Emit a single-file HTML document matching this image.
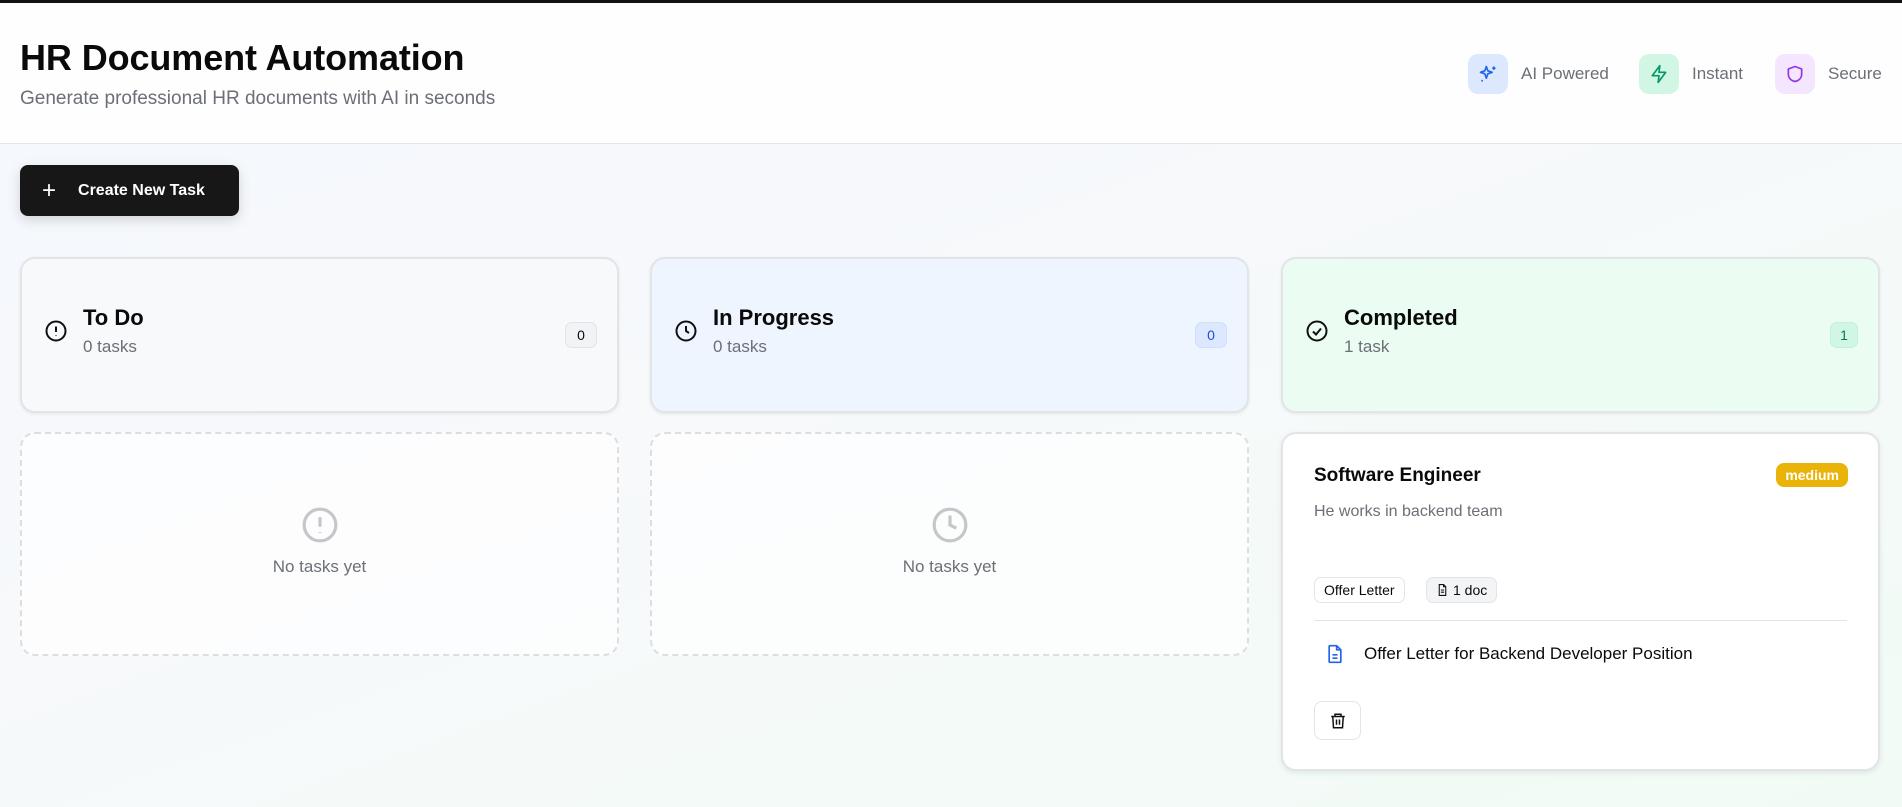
<!DOCTYPE html>
<html><head><meta charset="utf-8"><style>
*{box-sizing:border-box;margin:0;padding:0}
body{width:1902px;height:807px;overflow:hidden;font-family:"Liberation Sans",sans-serif;color:#0a0a0a;background:linear-gradient(160deg,#f4f7fc 0%,#f7f9fb 45%,#f1fbf5 100%);border-top:3px solid #111;position:relative}
.hdr{position:absolute;left:0;top:0;width:1902px;height:141px;background:rgba(255,255,255,.85);border-bottom:1px solid #e3e5e8}
h1{position:absolute;left:20px;top:34px;font-size:36px;font-weight:700;letter-spacing:-.1px}
.sub{position:absolute;left:20px;top:85px;font-size:19px;color:#6b6f76}
.feat{position:absolute;top:51px;display:flex;align-items:center;gap:13px;font-size:17px;color:#6b6f76}
.fi{width:40px;height:40px;border-radius:10px;display:flex;align-items:center;justify-content:center}
.btn{position:absolute;left:20px;top:162px;width:219px;height:51px;background:#171717;border-radius:8px;color:#fff;font-size:16px;font-weight:700;display:flex;align-items:center;padding-left:22px;gap:22px;box-shadow:0 4px 12px rgba(0,0,0,.15)}
.col{position:absolute;top:254px;width:599px}
.ch{height:156px;border-radius:15px;border:2px solid #e2e4e8;box-shadow:0 1px 3px rgba(0,0,0,.08);position:relative}
.ch svg{position:absolute;left:22px;top:60px}
.ch .t{position:absolute;left:61px;top:46px;font-size:22px;font-weight:700}
.ch .n{position:absolute;left:61px;top:78px;font-size:17px;color:#6b6f76}
.ch .b{position:absolute;right:20px;top:63px;min-width:32px;height:26px;border-radius:7px;border:1px solid #e2e4e8;font-size:14px;display:flex;align-items:center;justify-content:center}
.empty{margin-top:19px;height:224px;border:2px dashed #dcdee2;border-radius:15px;background:rgba(255,255,255,.7);text-align:center;color:#6b6f76;font-size:17px}
.empty svg{margin-top:72px}
.card{margin-top:19px;height:339px;border:2px solid #e2e4e8;border-radius:15px;background:#fff;box-shadow:0 2px 6px rgba(0,0,0,.08);position:relative}
</style></head><body>
<div class="hdr">
<h1>HR Document Automation</h1>
<div class="sub">Generate professional HR documents with AI in seconds</div>
<div class="feat" style="left:1468px"><div class="fi" style="background:#dbe8fe"><svg width="20" height="20" viewBox="0 0 24 24" fill="none" stroke="#2563eb" stroke-width="2" stroke-linejoin="round"><path d="M10 3l1.8 5.2L17 10l-5.2 1.8L10 17l-1.8-5.2L3 10l5.2-1.8z"/><path d="M19 3v4M17 5h4M5 19v2M4 20h2"/></svg></div>AI Powered</div>
<div class="feat" style="left:1639px"><div class="fi" style="background:#d1f7e4"><svg width="20" height="20" viewBox="0 0 24 24" fill="none" stroke="#059669" stroke-width="2" stroke-linejoin="round"><path d="M13 2L4 14h8l-1 8 9-12h-8z"/></svg></div>Instant</div>
<div class="feat" style="left:1775px"><div class="fi" style="background:#f3e6fe"><svg width="20" height="20" viewBox="0 0 24 24" fill="none" stroke="#9333ea" stroke-width="2" stroke-linejoin="round"><path d="M12 3l8 3v6c0 5-3.5 8-8 9-4.5-1-8-4-8-9V6z"/></svg></div>Secure</div>
</div>
<div class="btn"><span style="font-size:24px;font-weight:300">+</span>Create New Task</div>

<div class="col" style="left:20px">
<div class="ch" style="background:#f8f9fb"><svg width="24" height="24" viewBox="0 0 24 24" fill="none" stroke="#111" stroke-width="2"><circle cx="12" cy="12" r="9.5"/><path d="M12 7.5v5.5M12 16.5v.5"/></svg><div class="t">To Do</div><div class="n">0 tasks</div><div class="b" style="background:#f1f3f6">0</div></div>
<div class="empty"><svg width="38" height="38" viewBox="0 0 24 24" fill="none" stroke="#c4c6ca" stroke-width="2"><circle cx="12" cy="12" r="10"/><path d="M12 7v6M12 16.5v.5"/></svg><div style="margin-top:8px">No tasks yet</div></div>
</div>
<div class="col" style="left:650px">
<div class="ch" style="background:#eef5fe"><svg width="24" height="24" viewBox="0 0 24 24" fill="none" stroke="#111" stroke-width="2"><circle cx="12" cy="12" r="9.5"/><path d="M12 7v5l3 2"/></svg><div class="t">In Progress</div><div class="n">0 tasks</div><div class="b" style="background:#dbe8fe;color:#1d4ed8;border-color:#cfe0fb">0</div></div>
<div class="empty"><svg width="38" height="38" viewBox="0 0 24 24" fill="none" stroke="#c4c6ca" stroke-width="2"><circle cx="12" cy="12" r="10"/><path d="M12 6v6l4 2"/></svg><div style="margin-top:8px">No tasks yet</div></div>
</div>
<div class="col" style="left:1281px">
<div class="ch" style="background:#ebfcf2"><svg width="24" height="24" viewBox="0 0 24 24" fill="none" stroke="#111" stroke-width="2"><circle cx="12" cy="12" r="9.5"/><path d="M8 12.5l3 3 5-6"/></svg><div class="t">Completed</div><div class="n">1 task</div><div class="b" style="background:#d1f7e4;color:#047857;border-color:#c2f0d8;min-width:28px">1</div></div>
<div class="card">
<div style="position:absolute;left:31px;top:31px;font-size:19px;font-weight:700">Software Engineer</div>
<div style="position:absolute;right:30px;top:29px;background:#eab308;color:#fff;font-size:14px;font-weight:700;border-radius:8px;padding:4px 9px">medium</div>
<div style="position:absolute;left:31px;top:69px;font-size:16px;color:#6b6f76">He works in backend team</div>
<div style="position:absolute;left:31px;top:143px;height:26px;padding:0 9px;border:1px solid #e2e4e8;border-radius:7px;font-size:14px;display:flex;align-items:center">Offer Letter</div>
<div style="position:absolute;left:143px;top:143px;height:26px;padding:0 9px;border:1px solid #e2e4e8;background:#f3f4f6;border-radius:7px;font-size:14px;display:flex;align-items:center;gap:4px"><svg width="13" height="14" viewBox="0 0 24 24" fill="none" stroke="#111" stroke-width="2"><path d="M14 2H6v20h12V6z M14 2v4h4M9 12h6M9 16h6"/></svg>1 doc</div>
<div style="position:absolute;left:31px;right:31px;top:186px;border-top:1px solid #e2e4e8"></div>
<svg style="position:absolute;left:42px;top:209px" width="20" height="22" viewBox="0 0 24 24" fill="none" stroke="#2563eb" stroke-width="2" stroke-linejoin="round"><path d="M14 2H6a1 1 0 0 0-1 1v18a1 1 0 0 0 1 1h12a1 1 0 0 0 1-1V7z M14 2v5h5M9 13h6M9 17h6"/></svg>
<div style="position:absolute;left:81px;top:210px;font-size:17px">Offer Letter for Backend Developer Position</div>
<div style="position:absolute;left:31px;top:267px;width:47px;height:39px;border:1px solid #e2e4e8;border-radius:8px;display:flex;align-items:center;justify-content:center"><svg width="18" height="18" viewBox="0 0 24 24" fill="none" stroke="#111" stroke-width="2"><path d="M3 6h18M8 6V3h8v3M5 6l1 15h12l1-15M10 10v7M14 10v7"/></svg></div>
</div>
</div>
</body></html>
